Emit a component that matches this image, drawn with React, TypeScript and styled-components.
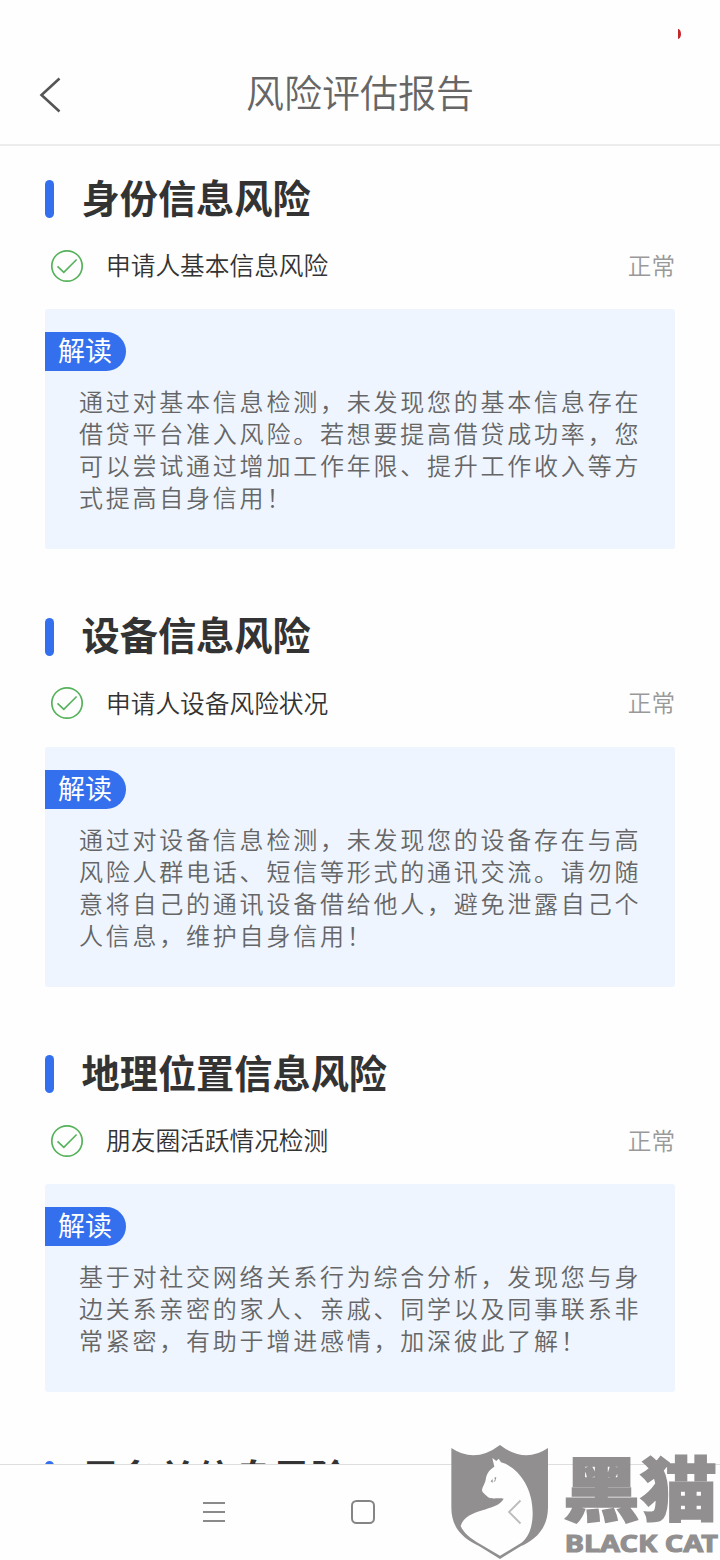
import React from "react";
import styled, { createGlobalStyle } from "styled-components";

const GlobalStyle = createGlobalStyle`
  * { box-sizing: border-box; }
  body {
    margin: 0;
    background: #fefefe;
    font-family: "Noto Sans CJK SC", "Liberation Sans", sans-serif;
  }
`;

const Screen = styled.div`
  position: relative;
  display: flex;
  flex-direction: column;
  width: 720px;
  height: 1560px;
  overflow: hidden;
  background: #fefefe;
`;

const StatusBar = styled.div`
  display: flex;
  justify-content: flex-end;
  height: 48px;
  padding: 29px 39px 0 0;
`;

const RecordingMark = styled.span`
  width: 3px;
  height: 10px;
  border-radius: 0 3px 3px 0 / 0 5px 5px 0;
  background: #c3262b;
`;

const Header = styled.header`
  display: grid;
  grid-template-columns: 100px 1fr 100px;
  align-items: center;
  height: 98px;
  padding-bottom: 11px;
  border-bottom: 2px solid #ececec;
`;

const BackButton = styled.button`
  display: flex;
  padding: 9px 0 0 36px;
  border: 0;
  background: none;
`;

const Title = styled.h1`
  margin: 0;
  color: #666;
  font-size: 38px;
  font-weight: 350;
  line-height: 46px;
  text-align: center;
`;

const Content = styled.main`
  display: flex;
  flex: 1;
  flex-direction: column;
  gap: 68.5px;
  min-height: 0;
  padding: 34px 45px 0;
  overflow: hidden;
`;

const Section = styled.section`
  flex: none;
`;

const Heading = styled.div`
  display: flex;
  align-items: center;
  height: 38px;
`;

const Accent = styled.span`
  width: 9px;
  height: 38px;
  margin-right: 27.5px;
  border-radius: 5px;
  background: #3470ee;
`;

const HeadingText = styled.h2`
  margin: 0;
  padding-bottom: 5px;
  color: #333;
  font-size: 38.2px;
  font-weight: 700;
  line-height: 38px;
`;

const CheckRow = styled.div`
  display: flex;
  align-items: center;
  height: 40px;
  margin: 27px 0 24px;
  padding-left: 5px;
`;

const CheckName = styled.span`
  flex: 1;
  margin-left: 22px;
  padding-bottom: 2px;
  color: #333;
  font-size: 24.7px;
  font-weight: 350;
  line-height: 38px;
`;

const CheckStatus = styled.span`
  padding-bottom: 1px;
  color: #999;
  font-size: 23.6px;
  font-weight: 350;
  line-height: 38px;
`;

const Card = styled.div`
  padding: 23px 0 36px;
  border-radius: 3px;
  background: #eff5fe;
`;

const Badge = styled.div`
  width: 81px;
  height: 39px;
  padding-left: 13px;
  border-radius: 0 20px 20px 0;
  background: #3470ee;
  color: #fff;
  font-size: 27px;
  line-height: 35px;
`;

const Explanation = styled.p`
  margin: 14px 0 0 34px;
  color: #666;
  font-size: 24px;
  font-weight: 350;
  letter-spacing: 2.77px;
  line-height: 32px;
  white-space: nowrap;
`;

const Line = styled.span`
  display: block;
`;

const NavBar = styled.nav`
  display: grid;
  flex: none;
  grid-template-columns: 149px 156px 20px;
  align-items: center;
  height: 96px;
  padding: 0 0 1px 199px;
  border-top: 1px solid #dedede;
`;

const NavButton = styled.button`
  position: relative;
  z-index: 2;
  display: flex;
  padding: 0;
  border: 0;
  background: none;
`;

const Watermark = styled.svg`
  position: absolute;
  right: 0;
  bottom: 0;
  z-index: 1;
`;

const CheckCircle = styled.svg`
  margin-top: 1px;
`;

const CheckIcon = () => (
  <CheckCircle width="34" height="34" viewBox="0 0 34 34" fill="none" stroke="#55b25a">
    <circle cx="17" cy="17" r="15.2" strokeWidth="1.7" />
    <path d="M7.5 17.3l6.3 6L26.6 10.5" strokeWidth="1.6" />
  </CheckCircle>
);

const BlackCatMark = () => (
  <Watermark width="280" height="130" viewBox="0 0 840 390" fill="#928f90">
    <path d="M34 54Q105 102 180 45Q254 102 324 54V232C324 300 280 332 242 349L180 387L118 349C75 327 34 300 34 232Z" />
    <path
      fill="#fefefe"
      d="M157 84L169 93L176 86L183 97C228 109 278 165 278 248C278 298 262 326 242 340L180 377L120 342C92 326 70 308 62 288C80 232 170 246 191 206C176 202 158 209 144 202C138 194 127 190 126 181C126 172 136 161 138 144C142 126 150 119 163 110Z"
    />
    <path d="M152 154L158 147L158 158ZM163 143L169 141L166 153L160 157L165 149Z" />
    <text
      transform="translate(368 257) scale(1 0.91)"
      fontFamily='"Noto Sans CJK SC", sans-serif'
      fontWeight="900"
      fontSize="232"
      textLength="464"
      stroke="#928f90"
      strokeWidth="5"
    >
      黑猫
    </text>
    <text
      x="374"
      y="367"
      fontFamily='"Noto Sans", sans-serif'
      fontWeight="700"
      fontSize="68"
      textLength="460"
      lengthAdjust="spacingAndGlyphs"
      stroke="#928f90"
      strokeWidth="3"
    >
      BLACK CAT
    </text>
  </Watermark>
);

interface Report {
  title: string;
  check?: string;
  lines?: string[];
}

const reports: Report[] = [
  {
    title: "身份信息风险",
    check: "申请人基本信息风险",
    lines: [
      "通过对基本信息检测，未发现您的基本信息存在",
      "借贷平台准入风险。若想要提高借贷成功率，您",
      "可以尝试通过增加工作年限、提升工作收入等方",
      "式提高自身信用！",
    ],
  },
  {
    title: "设备信息风险",
    check: "申请人设备风险状况",
    lines: [
      "通过对设备信息检测，未发现您的设备存在与高",
      "风险人群电话、短信等形式的通讯交流。请勿随",
      "意将自己的通讯设备借给他人，避免泄露自己个",
      "人信息，维护自身信用！",
    ],
  },
  {
    title: "地理位置信息风险",
    check: "朋友圈活跃情况检测",
    lines: [
      "基于对社交网络关系行为综合分析，发现您与身",
      "边关系亲密的家人、亲戚、同学以及同事联系非",
      "常紧密，有助于增进感情，加深彼此了解！",
    ],
  },
  { title: "黑名单信息风险" },
];

const ReportSection = ({ title, check, lines }: Report) => (
  <Section>
    <Heading>
      <Accent />
      <HeadingText>{title}</HeadingText>
    </Heading>
    {check && (
      <CheckRow>
        <CheckIcon />
        <CheckName>{check}</CheckName>
        <CheckStatus>正常</CheckStatus>
      </CheckRow>
    )}
    {lines && (
      <Card>
        <Badge>解读</Badge>
        <Explanation>
          {lines.map((line) => (
            <Line key={line}>{line}</Line>
          ))}
        </Explanation>
      </Card>
    )}
  </Section>
);

export default function App() {
  return (
    <>
      <GlobalStyle />
      <Screen>
        <StatusBar>
          <RecordingMark />
        </StatusBar>
        <Header>
          <BackButton aria-label="返回">
            <svg width="28" height="40" viewBox="0 0 28 40" fill="none" stroke="#555" strokeWidth="2.6">
              <path d="M23.5 3.5L5.5 20L23.5 36.5" />
            </svg>
          </BackButton>
          <Title>风险评估报告</Title>
        </Header>
        <Content>
          {reports.map((report) => (
            <ReportSection key={report.title} {...report} />
          ))}
        </Content>
        <NavBar>
          <NavButton aria-label="菜单">
            <svg width="30" height="30" viewBox="0 0 30 30" stroke="#8a8a8a" strokeWidth="2">
              <path d="M4 6h22M4 15h22M4 24h22" />
            </svg>
          </NavButton>
          <NavButton aria-label="主页">
            <svg width="30" height="30" viewBox="0 0 30 30" fill="none" stroke="#858585" strokeWidth="2">
              <rect x="4" y="4" width="22" height="22" rx="4.5" />
            </svg>
          </NavButton>
          <NavButton aria-label="后退">
            <svg width="20" height="30" viewBox="0 0 20 30" fill="none" stroke="#bcbcbc" strokeWidth="1.8">
              <path d="M16.5 3.5L5 15L16.5 26.5" />
            </svg>
          </NavButton>
        </NavBar>
        <BlackCatMark />
      </Screen>
    </>
  );
}
